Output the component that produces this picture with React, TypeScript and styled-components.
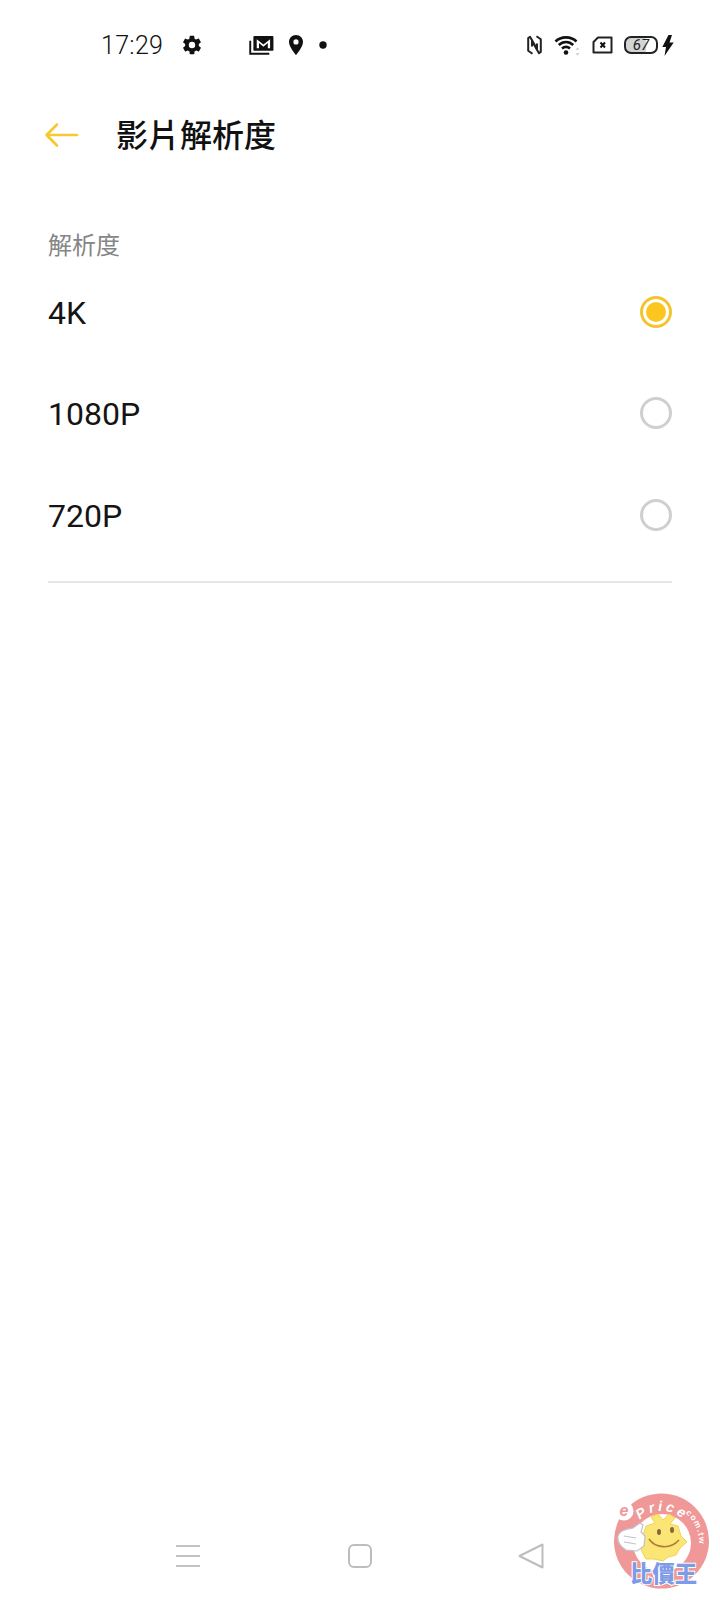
import React from "react";
import styled, { createGlobalStyle } from "styled-components";

const Global = createGlobalStyle`
  html, body { margin: 0; padding: 0; background: #fff; }
  body { font-family: Roboto, "Noto Sans CJK TC", sans-serif; }
`;

const Page = styled.div`
  position: relative;
  width: 720px;
  height: 1600px;
  display: flex;
  flex-direction: column;
  background: #fff;
  overflow: hidden;
`;

const StatusBar = styled.div`
  height: 90px;
  box-sizing: border-box;
  padding: 0 46px 0 101px;
  display: flex;
  align-items: center;
  justify-content: space-between;
  color: #111;
`;

const StatusGroup = styled.div`
  display: flex;
  align-items: center;
`;

const Time = styled.span`
  font-size: 25px;
  font-weight: 300;
  letter-spacing: 0.3px;
  width: 80px;
`;

const StatusIcon = styled.svg<{ $gap?: number }>`
  display: block;
  flex: none;
  margin-right: ${(p) => p.$gap ?? 0}px;
`;

const BatteryWrap = styled.div`
  width: 34px;
  height: 18px;
  box-sizing: border-box;
  border: 2px solid #222;
  border-radius: 7px;
  background: linear-gradient(90deg, #d4d4d4 0 67%, #fff 67%);
  display: flex;
  align-items: center;
  justify-content: center;
  font-size: 15px;
  line-height: 1;
  font-weight: 400;
  font-style: italic;
  color: #222;
  margin-right: 4px;
`;

const Header = styled.div`
  height: 90px;
  display: flex;
  align-items: center;
  padding-left: 44px;
`;

const Back = styled.svg`
  width: 36px;
  height: 28px;
  margin-right: 36px;
  display: block;
`;

const Title = styled.h1`
  margin: -4px 0 0;
  font-size: 32px;
  line-height: 40px;
  font-weight: 500;
  color: #111;
  font-family: "Noto Sans CJK TC", sans-serif;
`;

const Section = styled.div`
  padding: 47px 48px 0;
`;

const SectionLabel = styled.div`
  font-size: 24px;
  line-height: 34px;
  color: #858585;
  font-family: "Noto Sans CJK TC", sans-serif;
  font-weight: 400;
`;

const Option = styled.div`
  height: 101.5px;
  display: flex;
  align-items: center;
  justify-content: space-between;
  box-sizing: border-box;
`;

const OptionList = styled.div`
  margin-top: 0;
  padding-bottom: 15px;
  border-bottom: 2px solid #e6e6e6;
`;

const OptionLabel = styled.span`
  font-size: 32px;
  color: #141414;
  font-weight: 400;
  position: relative;
  top: 1px;
`;

const Radio = styled.span<{ $on?: boolean }>`
  width: 32px;
  height: 32px;
  box-sizing: border-box;
  border-radius: 50%;
  border: 3px solid ${(p) => (p.$on ? "#f4c430" : "#cfcfcf")};
  display: flex;
  align-items: center;
  justify-content: center;
  &::after {
    content: "";
    display: ${(p) => (p.$on ? "block" : "none")};
    width: 20px;
    height: 20px;
    border-radius: 50%;
    background: #fdc61e;
  }
`;

const NavBar = styled.div`
  margin-top: auto;
  height: 60px;
  margin-bottom: 14px;
  display: flex;
  align-items: center;
  padding-left: 176px;
`;

const NavIcon = styled.svg<{ $gap?: number }>`
  display: block;
  margin-right: ${(p) => p.$gap ?? 0}px;
`;

const Watermark = styled.svg`
  position: absolute;
  left: 600px;
  top: 1480px;
  width: 120px;
  height: 120px;
  opacity: 0.92;
`;

const options = [
  { label: "4K", on: true },
  { label: "1080P", on: false },
  { label: "720P", on: false },
];

export default function App() {
  return (
    <Page>
      <Global />
      <StatusBar>
        <StatusGroup>
          <Time>17:29</Time>
          <StatusIcon $gap={46} width="22" height="22" viewBox="0 0 24 24" fill="#111">
            <path d="M19.4 13c.04-.33.06-.66.06-1s-.02-.67-.07-1l2.1-1.65c.2-.15.25-.42.13-.64l-2-3.46c-.12-.22-.38-.3-.6-.22l-2.5 1c-.52-.4-1.08-.73-1.7-.98l-.37-2.65A.49.49 0 0 0 14 2h-4c-.25 0-.46.18-.5.42l-.37 2.65c-.62.25-1.18.59-1.7.98l-2.5-1c-.22-.08-.48 0-.6.22l-2 3.46c-.12.22-.07.49.13.64L4.57 11c-.05.33-.07.66-.07 1s.02.67.07 1l-2.11 1.65c-.2.15-.25.42-.13.64l2 3.46c.12.22.38.3.6.22l2.5-1c.52.4 1.08.73 1.7.98l.37 2.65c.04.24.25.42.5.42h4c.25 0 .46-.18.5-.42l.37-2.65c.62-.25 1.18-.59 1.7-.98l2.5 1c.22.08.48 0 .6-.22l2-3.46c.12-.22.07-.49-.13-.64zM12 15.500a3.500 3.500 0 1 1 0-7 3.500 3.500 0 0 1 0 7z" />
          </StatusIcon>
          <StatusIcon $gap={14} width="25" height="21" viewBox="0 0 26 22">
            <path d="M1.200 6v13.600h20" fill="none" stroke="#111" strokeWidth="2" />
            <rect x="4.500" y="1" width="21" height="15.600" rx="1" fill="#111" />
            <path d="M8 14V4.500l7 5.500 7-5.500V14h-2.400V8.500L15 12.200l-4.600-3.700V14z" fill="#fff" />
          </StatusIcon>
          <StatusIcon $gap={15} width="16" height="22" viewBox="0 0 16 22">
            <path d="M8 1C4 1 1 4 1 8c0 5 7 13 7 13s7-8 7-13c0-4-3-7-7-7zm0 9.500A2.600 2.600 0 1 1 8 5.300a2.600 2.600 0 0 1 0 5.200z" fill="#111" />
          </StatusIcon>
          <StatusIcon width="8" height="8" viewBox="0 0 8 8">
            <circle cx="4" cy="4" r="3.700" fill="#111" />
          </StatusIcon>
        </StatusGroup>
        <StatusGroup>
          <StatusIcon $gap={12} width="15" height="20" viewBox="0 0 15 20" fill="none" stroke="#222" strokeWidth="2" strokeLinejoin="round">
            <path d="M5.500 18.800 1.200 15.800V3L3 1.800l7 12.200V8.500" />
            <path d="M9.500 1.200l4.300 3V17L12 18.200 5 6v5.500" />
          </StatusIcon>
          <StatusIcon $gap={10} width="28" height="22" viewBox="0 0 28 22" fill="none">
            <path d="M1.500 7.500C7 2 17 2 22.500 7.500M4.800 11C9 7 15 7 19.200 11M8 14.500c2.400-2 5.600-2 8 0" stroke="#111" strokeWidth="2.600" />
            <circle cx="12" cy="18.500" r="2.300" fill="#111" />
            <path d="M23.500 13.500l2 2.200h-4zM23.500 21.500l2-2.200h-4z" fill="#c9c9c9" />
          </StatusIcon>
          <StatusIcon $gap={11} width="21" height="18" viewBox="0 0 21 18">
            <path d="M6 1.500h13.500v15H1.500V6z" fill="none" stroke="#222" strokeWidth="2" strokeLinejoin="round" />
            <path d="M8.500 6.500l4.500 5M13 6.500l-4.500 5" stroke="#111" strokeWidth="2" />
          </StatusIcon>
          <BatteryWrap>67</BatteryWrap>
          <StatusIcon width="12" height="21" viewBox="0 0 12 21">
            <path d="M6.500 0 .3 12H4L2.500 21 11.700 7.500H7.500L10 0z" fill="#111" />
          </StatusIcon>
        </StatusGroup>
      </StatusBar>
      <Header>
        <Back viewBox="0 0 36 28" fill="none" stroke="#f6c92f" strokeWidth="2.600" strokeLinecap="round" strokeLinejoin="round">
          <path d="M2.500 14H33M13 3.500 2.500 14 13 24.500" />
        </Back>
        <Title>影片解析度</Title>
      </Header>
      <Section>
        <SectionLabel>解析度</SectionLabel>
        <OptionList>
          {options.map((o) => (
            <Option key={o.label}>
              <OptionLabel>{o.label}</OptionLabel>
              <Radio $on={o.on} />
            </Option>
          ))}
        </OptionList>
      </Section>
      <NavBar>
        <NavIcon $gap={148} width="24" height="24" viewBox="0 0 24 24" stroke="#c2c2c2" strokeWidth="2">
          <path d="M0 2h24M0 12h24M0 22h24" />
        </NavIcon>
        <NavIcon $gap={146} width="24" height="24" viewBox="0 0 24 24" fill="none" stroke="#bdbdbd" strokeWidth="2">
          <rect x="1" y="1" width="22" height="22" rx="5" />
        </NavIcon>
        <NavIcon width="26" height="28" viewBox="0 0 26 28" fill="none" stroke="#bdbdbd" strokeWidth="2" strokeLinejoin="round">
          <path d="M24.500 2.500v23L1.500 14z" />
        </NavIcon>
      </NavBar>
      <Watermark viewBox="0 0 120 120">
        <defs>
          <path id="arcMain" d="M31 62A31 31 0 0 1 93 62" fill="none" />
          <path id="arcSmall" d="M25 62A37 37 0 1 1 94 80.500" fill="none" />
        </defs>
        <circle cx="61.500" cy="61" r="47.500" fill="#ef8f8f" />
        <circle cx="62" cy="63" r="29" fill="#fff" />
        <circle cx="24" cy="31" r="9.500" fill="#fff" />
        <text x="24" y="36" textAnchor="middle" fontFamily="Liberation Sans, sans-serif" fontSize="16" fontWeight="700" fontStyle="italic" fill="#ef8f8f">e</text>
        <text fontFamily="Liberation Sans, sans-serif" fontSize="14" fontWeight="700" fontStyle="italic" fill="#fff" letterSpacing="3">
          <textPath href="#arcMain" startOffset="24">Price</textPath>
        </text>
        <text fontFamily="Liberation Sans, sans-serif" fontSize="8.500" fontWeight="700" fill="#fff" letterSpacing="1">
          <textPath href="#arcSmall" startOffset="80">.com.tw</textPath>
        </text>
        <path d="M46 46l9-3-4-6 7-3 5 6 6-6 6 4-5 6 8 2 3 10 6 6-7 6-4 7-8 2-5 4-9-2-8 0-4-7-3-10 4-7z" fill="#fbe36a" stroke="#f3cf4a" strokeWidth="1" />
        <ellipse cx="59" cy="52" rx="2" ry="3" fill="#7a5a30" />
        <ellipse cx="72" cy="50" rx="2" ry="3" fill="#7a5a30" />
        <path d="M49 59c6 9 21 11 30 1" fill="none" stroke="#a8722e" strokeWidth="1.600" />
        <path d="M18 56c2-6 9-7 15-8l7-5 3 2-2 7 4 4-1 10-7 5-11-1c-5-3-9-8-8-14z" fill="#fff" stroke="#b9bccb" strokeWidth="1.200" />
        <path d="M24 56l12 2M24 62l12 2" stroke="#b9bccb" strokeWidth="1" fill="none" />
        <text x="30" y="102" fontFamily="Noto Sans CJK TC, sans-serif" fontSize="23" fontWeight="900" fill="#7393e6" stroke="#fff" strokeWidth="2" paintOrder="stroke" textLength="67" lengthAdjust="spacingAndGlyphs">比價王</text>
      </Watermark>
    </Page>
  );
}
